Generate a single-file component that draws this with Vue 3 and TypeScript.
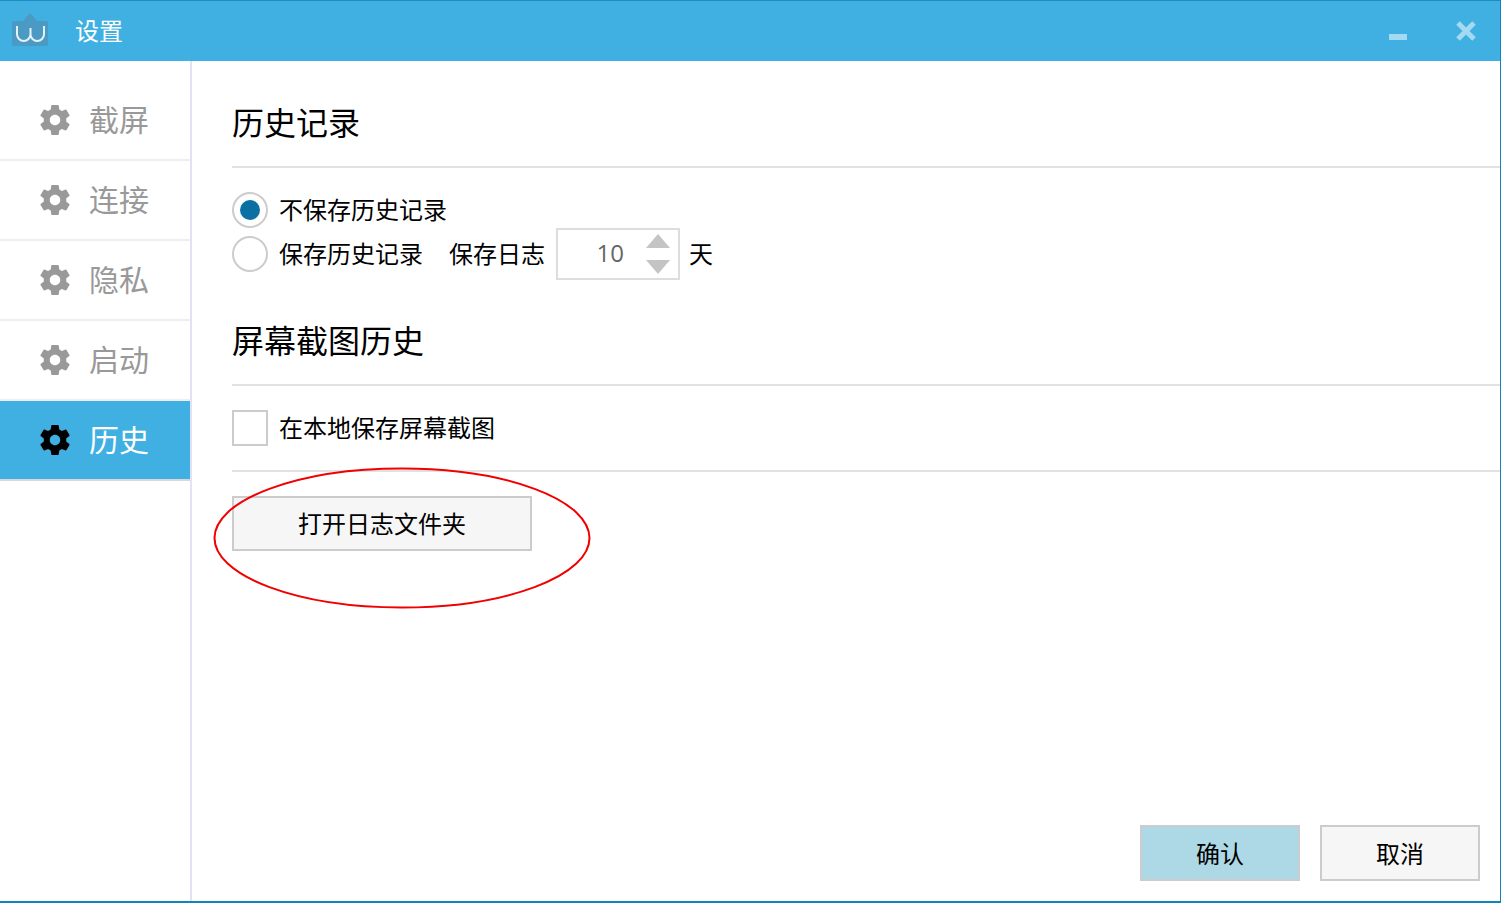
<template>
  <div class="win">
    <header class="titlebar">
      <svg class="logo" width="36" height="34" viewBox="0 0 36 34">
        <path d="M2 8h9l7-8 7 8h9a2 2 0 0 1 2 2v21a2 2 0 0 1-2 2H2a2 2 0 0 1-2-2V10a2 2 0 0 1 2-2z" fill="#4a9ac4" />
        <path d="M5 13v8.25a6.75 6.75 0 0 0 13.5 0V15v6.25a6.75 6.75 0 0 0 13.5 0V13" fill="none" stroke="#e4f3fa" stroke-width="2" />
      </svg>
      <span class="title">设置</span>
      <span class="spacer"></span>
      <span class="min"></span>
      <svg class="close" width="22" height="22" viewBox="0 0 22 22">
        <path d="M3 3l16 16M19 3L3 19" stroke="#a3daf2" stroke-width="5" />
      </svg>
    </header>
    <div class="body">
      <nav class="side">
        <div v-for="item in navItems" :key="item" class="nav-item" :class="{ active: item === current }">
          <svg class="gear" width="36" height="36" viewBox="0 0 24 24">
            <path
              d="M19.43 12.98c.04-.32.07-.64.07-.98s-.03-.66-.07-.98l2.11-1.65c.19-.15.24-.42.12-.64l-2-3.46c-.12-.22-.39-.3-.61-.22l-2.49 1c-.52-.4-1.08-.73-1.69-.98l-.38-2.65A.49.49 0 0 0 14 2h-4c-.25 0-.46.18-.49.42l-.38 2.65c-.61.25-1.17.59-1.69.98l-2.49-1c-.23-.09-.49 0-.61.22l-2 3.46c-.13.22-.07.49.12.64l2.11 1.65c-.04.32-.07.65-.07.98s.03.66.07.98l-2.11 1.65c-.19.15-.24.42-.12.64l2 3.46c.12.22.39.3.61.22l2.49-1c.52.4 1.08.73 1.69.98l.38 2.65c.03.24.24.42.49.42h4c.25 0 .46-.18.49-.42l.38-2.65c.61-.25 1.17-.59 1.69-.98l2.49 1c.23.09.49 0 .61-.22l2-3.46c.12-.22.07-.49-.12-.64l-2.11-1.65zM12 15.5c-1.93 0-3.5-1.57-3.5-3.5s1.57-3.5 3.5-3.5 3.5 1.57 3.5 3.5-1.57 3.5-3.5 3.5z"
            />
          </svg>
          <span class="nav-text">{{ item }}</span>
        </div>
      </nav>
      <main class="content">
        <h2 class="heading first">历史记录</h2>
        <div class="options">
          <div class="row">
            <span class="radio on"><i></i></span>
            <span class="txt">不保存历史记录</span>
          </div>
          <div class="row">
            <span class="radio"></span>
            <span class="txt">保存历史记录</span>
            <span class="txt log-label">保存日志</span>
            <div class="spin">
              <span class="num">10</span>
              <div class="arrows">
                <span class="up"></span>
                <span class="down"></span>
              </div>
            </div>
            <span class="txt unit">天</span>
          </div>
        </div>
        <h2 class="heading second">屏幕截图历史</h2>
        <div class="row check-row">
          <span class="check"></span>
          <span class="txt">在本地保存屏幕截图</span>
        </div>
        <div class="open-wrap">
          <button class="btn open"><span class="lift">打开日志文件夹</span></button>
          <svg class="ring" width="380" height="144" viewBox="0 0 380 144">
            <ellipse cx="190" cy="72" rx="187.5" ry="69.5" fill="none" stroke="#f00000" stroke-width="2" />
          </svg>
        </div>
        <div class="foot">
          <button class="btn ok"><span class="lift">确认</span></button>
          <button class="btn cancel"><span class="lift">取消</span></button>
        </div>
      </main>
    </div>
  </div>
</template>

<script setup lang="ts">
const navItems = ['截屏', '连接', '隐私', '启动', '历史']
const current = '历史'
</script>

<style>
html,
body {
  margin: 0;
  background: #fff;
}
</style>

<style scoped>
.win {
  width: 1501px;
  height: 903px;
  box-sizing: border-box;
  border-bottom: 2px solid #0f85ba;
  border-right: 1px solid #0f85ba;
  display: flex;
  flex-direction: column;
  overflow: hidden;
  font-family: "Noto Sans CJK SC", "Noto Sans", sans-serif;
  color: #000;
  background: #fff;
}
.titlebar {
  height: 61px;
  box-sizing: border-box;
  flex: none;
  border-top: 1px solid #1a8cc0;
  background: #40b0e2;
  display: flex;
  align-items: center;
  padding: 0 23px 0 12px;
}
.logo {
  align-self: flex-start;
  margin-top: 12px;
}
.title {
  margin-left: 27px;
  margin-top: -4px;
  font-size: 24px;
  color: #fff;
}
.spacer {
  flex: 1;
}
.min {
  width: 18px;
  height: 6px;
  margin-top: 12px;
  margin-right: 48px;
  background: #a3daf2;
}
.close {
  display: block;
}
.body {
  flex: 1;
  display: flex;
  min-height: 0;
}
.side {
  width: 192px;
  flex: none;
  box-sizing: border-box;
  border-right: 2px solid #e2e2f6;
  padding-top: 20px;
}
.nav-item {
  height: 80px;
  box-sizing: border-box;
  border-bottom: 2px solid #eeeeee;
  display: flex;
  align-items: center;
  padding-left: 37px;
  gap: 16px;
  font-size: 30px;
  color: #999999;
  fill: #999999;
}
.nav-text {
  margin-top: -4px;
}
.nav-item.active {
  background: #40b0e2;
  color: #fff;
  fill: #000;
  border-bottom-color: #d8d8d8;
}
.content {
  flex: 1;
  padding-left: 40px;
  display: flex;
  flex-direction: column;
  min-width: 0;
}
.heading {
  margin: 0;
  font-size: 32px;
  font-weight: 400;
  line-height: 44px;
  border-bottom: 2px solid #e2e2e2;
}
.heading.first {
  padding-top: 38px;
  padding-bottom: 23px;
}
.heading.second {
  margin-top: 45px;
  padding-bottom: 23px;
}
.options {
  margin-top: 24px;
  display: flex;
  flex-direction: column;
  gap: 8px;
}
.row {
  display: flex;
  align-items: center;
  height: 36px;
  font-size: 24px;
}
.txt {
  position: relative;
  top: -2px;
}
.lift {
  position: relative;
  top: -1px;
}
.radio {
  width: 36px;
  height: 36px;
  box-sizing: border-box;
  border: 2px solid #cccccc;
  border-radius: 50%;
  margin-right: 11px;
  display: flex;
  align-items: center;
  justify-content: center;
}
.radio i {
  width: 20px;
  height: 20px;
  border-radius: 50%;
  background: #0a70a3;
}
.log-label {
  margin-left: 26px;
}
.spin {
  width: 124px;
  height: 52px;
  box-sizing: border-box;
  border: 2px solid #dddddd;
  margin-left: 11px;
  display: flex;
  align-items: center;
  justify-content: flex-end;
  padding-right: 8px;
  gap: 22px;
}
.num {
  position: relative;
  top: -2px;
  font-family: "Open Sans", sans-serif;
  font-size: 24px;
  color: #666666;
}
.arrows {
  display: flex;
  flex-direction: column;
  gap: 12px;
}
.up,
.down {
  width: 0;
  height: 0;
  border-left: 12px solid transparent;
  border-right: 12px solid transparent;
}
.up {
  border-bottom: 14px solid #c4c4c4;
}
.down {
  border-top: 14px solid #c4c4c4;
}
.unit {
  margin-left: 9px;
}
.check-row {
  margin-top: 24px;
}
.check {
  width: 36px;
  height: 36px;
  box-sizing: border-box;
  border: 2px solid #cccccc;
  margin-right: 11px;
}
.open-wrap {
  position: relative;
  margin-top: 24px;
  border-top: 2px solid #e2e2e2;
  padding-top: 24px;
}
.btn {
  display: block;
  box-sizing: border-box;
  border: 2px solid #cccccc;
  border-radius: 0;
  background: #f6f6f6;
  font-family: inherit;
  font-size: 24px;
  color: #000;
  padding: 0;
}
.open {
  width: 300px;
  height: 55px;
}
.ring {
  position: absolute;
  left: -20px;
  top: -6px;
  pointer-events: none;
}
.foot {
  margin-top: auto;
  display: flex;
  justify-content: flex-end;
  gap: 20px;
  padding: 0 20px 20px 0;
}
.ok,
.cancel {
  width: 160px;
  height: 56px;
}
.ok {
  background: #add8e6;
}
</style>
